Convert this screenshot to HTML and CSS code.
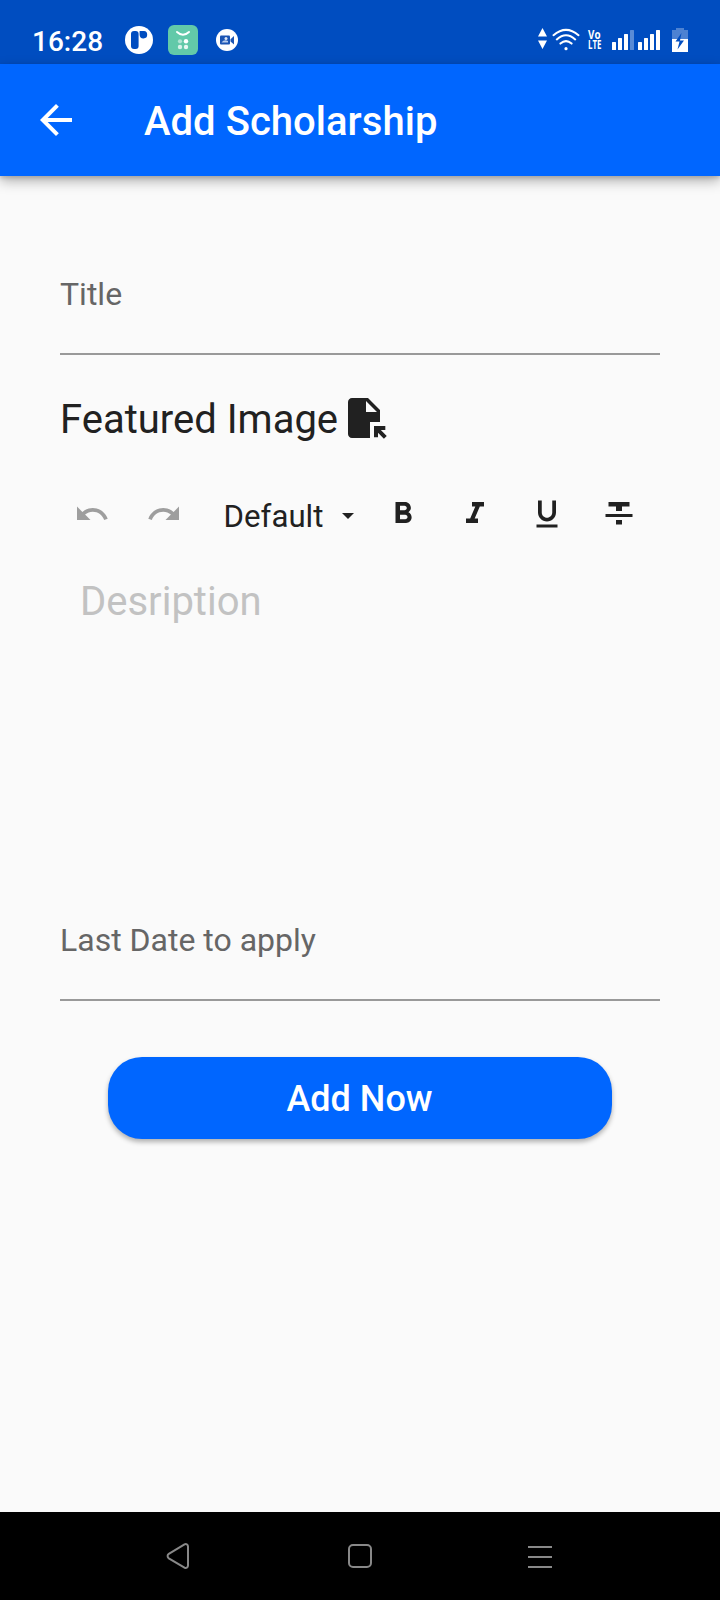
FILE: index.html
```html
<!DOCTYPE html>
<html lang="en">
<head>
<meta charset="utf-8">
<title>Add Scholarship</title>
<link rel="stylesheet" href="styles.css">
</head>
<body>
<div class="screen">
  <div class="status-bar">
    <span class="clock">16:28</span>
    <svg class="notif" width="28" height="28" viewBox="0 0 28 28">
      <circle cx="14" cy="14" r="14" fill="#fff"/>
      <rect x="6" y="5" width="7.6" height="18" rx="3" fill="#004dc0"/>
      <path d="M14.6 5H19a3.6 3.6 0 0 1 3.2 3.6 3.8 3.8 0 0 1-7.6.2z" fill="#004dc0"/>
    </svg>
    <svg class="app-icon" width="30" height="30" viewBox="0 0 30 30">
      <rect width="30" height="30" rx="6" fill="#62c9a9"/>
      <path d="M9 7q6 5.600 12 0" fill="none" stroke="#fff" stroke-width="1.900" stroke-linecap="round"/>
      <circle cx="12" cy="16.300" r="2.100" fill="#b0e4d4"/>
      <circle cx="18" cy="16.300" r="2.200" fill="#fff"/>
      <circle cx="12" cy="22" r="2.200" fill="#d8f2ea"/>
      <circle cx="18" cy="22" r="2.200" fill="#e8f8f3"/>
    </svg>
    <svg class="meet" width="22" height="22" viewBox="0 0 22 22">
      <circle cx="11" cy="11" r="11" fill="#fff"/>
      <rect x="4" y="6.500" width="10" height="9" rx="1" fill="#1c55b4"/>
      <path d="M14.500 10.200 18 7v8.500l-3.500-3z" fill="#1c55b4"/>
      <circle cx="10" cy="9.500" r="1.500" fill="#dfe8f7"/>
      <path d="M5.500 13.500q2.500-3.500 6.500-1.500v1.500z" fill="#b9cdec"/>
    </svg>
    <div class="signals">
      <svg class="arrows" width="9" height="22" viewBox="0 0 9 22" fill="#fff">
        <path d="M4.500 0 9 8.500H0zM0 12.500h9L4.500 21z"/>
      </svg>
      <svg class="wifi" width="28" height="24" viewBox="0 0 28 24" fill="none" stroke="#fff" stroke-width="2" stroke-linecap="round">
        <path d="M1.500 7.200Q14-3.500 26.500 7.200M4.800 11.400q9.200-8.200 18.400 0M8.400 15.600q5.600-5 11.200 0"/>
        <circle cx="14" cy="20.700" r="1.600" fill="#fff" stroke="none"/>
      </svg>
      <svg class="volte" width="14" height="20" viewBox="0 0 14 20" fill="#fff">
        <text><tspan x="0" y="9" textLength="12.500" lengthAdjust="spacingAndGlyphs">Vo</tspan><tspan x="0" y="18.600" textLength="13.500" lengthAdjust="spacingAndGlyphs">LTE</tspan></text>
      </svg>
      <svg class="bars" width="48" height="20" viewBox="0 0 48 20" fill="#fff">
        <rect y="12" width="4" height="8" rx=".5"/><rect x="6" y="8" width="4" height="12" rx=".5"/>
        <rect x="12" y="4" width="4" height="16" rx=".5"/><rect x="18" width="4" height="20" rx=".5" opacity=".35"/>
        <rect x="26" y="12" width="4" height="8" rx=".5"/><rect x="32" y="8" width="4" height="12" rx=".5"/>
        <rect x="38" y="4" width="4" height="16" rx=".5"/><rect x="44" width="4" height="20" rx=".5"/>
      </svg>
      <svg class="battery" width="16" height="24" viewBox="0 0 16 24">
        <path d="M4 0h8v2h4v9H0V2h4z" fill="#4d82d2"/>
        <path d="M0 11h16v13H0z" fill="#fff"/>
        <path d="M9.500 5 3.500 13.500h4L5.500 21.500l6.500-9H8z" fill="#004dc0"/>
      </svg>
    </div>
  </div>

  <header class="app-bar">
    <svg width="48" height="48" viewBox="0 0 24 24" fill="#fff"><path d="M20 11H7.830l5.590-5.590L12 4l-8 8 8 8 1.410-1.410L7.830 13H20z"/></svg>
    <h1 class="app-title">Add Scholarship</h1>
  </header>

  <main class="form">
    <div class="field"><span>Title</span></div>

    <div class="featured">
      <span>Featured Image</span>
      <svg width="48" height="48" viewBox="0 0 24 24" fill="#212121"><path d="M14 2H6C4.900 2 4 2.900 4 4v16c0 1.100.890 2 1.990 2H15v-8h5V8zM13 9V3.500L18.500 9zM17 21.660V16h5.660v2h-2.240l2.950 2.950-1.410 1.410L19 19.410v2.250z"/></svg>
    </div>

    <div class="toolbar">
      <div class="tool muted"><svg viewBox="0 0 24 24"><path d="M12.500 8c-2.650 0-5.050.990-6.900 2.600L2 7v9h9l-3.620-3.620c1.390-1.160 3.160-1.880 5.120-1.880 3.540 0 6.550 2.310 7.600 5.500l2.370-.780C21.080 11.030 17.150 8 12.500 8z"/></svg></div>
      <div class="tool muted"><svg viewBox="0 0 24 24"><path d="M18.400 10.600C16.550 8.990 14.150 8 11.500 8c-4.650 0-8.580 3.030-9.960 7.220L3.900 16c1.050-3.190 4.050-5.500 7.600-5.500 1.950 0 3.730.720 5.120 1.880L13 16h9V7z"/></svg></div>
      <div class="font-size"><span>Default</span><svg width="12" height="6" viewBox="0 0 12 6"><path d="M0 0h12L6 6z"/></svg></div>
      <div class="tool"><svg viewBox="0 0 24 24"><path d="M15.600 10.790c.970-.670 1.650-1.770 1.650-2.790 0-2.260-1.750-4-4-4H7v14h7.040c2.090 0 3.710-1.700 3.710-3.790 0-1.520-.860-2.820-2.150-3.420zM10 6.500h3c.830 0 1.500.670 1.500 1.500s-.670 1.500-1.500 1.500h-3zm3.500 9H10v-3h3.500c.830 0 1.500.670 1.500 1.500s-.670 1.500-1.500 1.500z"/></svg></div>
      <div class="tool"><svg viewBox="0 0 24 24"><path d="M10 4v3h2.210l-3.420 8H6v3h8v-3h-2.210l3.420-8H18V4z"/></svg></div>
      <div class="tool"><svg viewBox="0 0 24 24"><path d="M12 17c3.310 0 6-2.690 6-6V3h-2.500v8c0 1.930-1.570 3.500-3.500 3.500S8.500 12.930 8.500 11V3H6v8c0 3.310 2.690 6 6 6zm-7 2v2h14v-2z"/></svg></div>
      <div class="tool"><svg viewBox="0 0 24 24"><path d="M10 19h4v-3h-4zM5 4v3h5v3h4V7h5V4zM3 14h18v-2H3z"/></svg></div>
    </div>

    <div class="editor">Desription</div>

    <div class="field"><span>Last Date to apply</span></div>

    <button class="submit">Add Now</button>
  </main>

  <nav class="nav-bar">
    <svg width="24" height="28" viewBox="0 0 24 28"><path d="M18.500 2.400 2.800 11.800a2.700 2.700 0 0 0 0 4.500l15.700 9.300c1.600.900 3.500.100 3.500-2.100V4.500c0-2.200-1.900-3-3.500-2.100z"/></svg>
    <svg class="home" width="24" height="24" viewBox="0 0 24 24"><rect x="1" y="1" width="22" height="22" rx="4"/></svg>
    <svg class="menu" width="24" height="22" viewBox="0 0 24 22"><path d="M0 1h24M0 11h24M0 21h24"/></svg>
  </nav>
</div>
</body>
</html>
```
FILE: styles.css
```css
* { box-sizing: border-box; }
body { margin: 0; font-family: Roboto, "Liberation Sans", sans-serif; color: #212121; }
svg { display: block; flex: none; }

.screen { width: 720px; height: 1600px; display: flex; flex-direction: column; background: #fafafa; }

.status-bar { height: 64px; padding: 16px 32px 0; display: flex; align-items: center; background: #004dc0; color: #fff; }
.clock { width: 93px; font-size: 28px; font-weight: 500; line-height: 34px; padding-top: 4px; }
.app-icon { margin-left: 15px; }
.meet { margin-left: 18px; }
.signals { margin-left: auto; display: flex; align-items: center; }
.arrows { margin-top: -3px; }
.wifi { margin-left: 5px; }
.volte { margin-left: 8px; overflow: visible; font-family: "Open Sans", sans-serif; font-size: 11.500px; font-weight: 700; }
.bars { margin-left: 10px; }
.battery { margin-left: 12px; }

.app-bar { height: 112px; padding-left: 32px; display: flex; align-items: center; gap: 64px; background: #06f; color: #fff; box-shadow: 0 5px 12px rgba(0, 0, 0, .3), 0 2px 4px rgba(0, 0, 0, .14); }
.app-title { margin: 0; font-size: 40px; font-weight: 500; line-height: 48px; padding-top: 4px; letter-spacing: .03px; }

.form { flex: 1; padding: 58px 60px 0; display: flex; flex-direction: column; }
.field { height: 121px; display: flex; align-items: center; border-bottom: 2px solid #999; color: #666; font-size: 32px; line-height: 40px; }
.featured { height: 48px; margin-top: 39px; display: flex; align-items: center; font-size: 40px; line-height: 48px; }
.featured span { padding-top: 4px; }
.featured svg { margin-left: 2px; }

.toolbar { height: 64px; margin-top: 40px; display: flex; align-items: center; gap: 8px; }
.tool { width: 63.8px; display: flex; justify-content: center; }
.tool svg { width: 36px; height: 36px; fill: #212121; }
.tool.muted svg { fill: #9e9e9e; }
.font-size { width: 160px; padding: 4px 10px 0 20px; display: flex; align-items: center; justify-content: space-between; font-size: 31.200px; line-height: 40px; }
.font-size span { padding-top: 2px; }
.font-size svg { fill: #212121; }

.editor { height: 334px; padding: 32px 20px; font-size: 40px; line-height: 48px; color: #c2c2c2; }

.submit { height: 82px; margin: 56px 48px 0; padding: 2px 1px 0 0; border: 0; border-radius: 34px; background: #06f; color: #fff; font-family: inherit; font-size: 36px; font-weight: 500; line-height: 44px; box-shadow: 0 3px 5px rgba(0, 0, 0, .3); }

.nav-bar { height: 88px; padding: 0 168px 0 166px; display: flex; align-items: center; justify-content: space-between; background: #000; }
.nav-bar svg { fill: none; stroke: #888; stroke-width: 2; }
.home { margin-left: 2px; }
.menu { margin-top: 2px; }
```
